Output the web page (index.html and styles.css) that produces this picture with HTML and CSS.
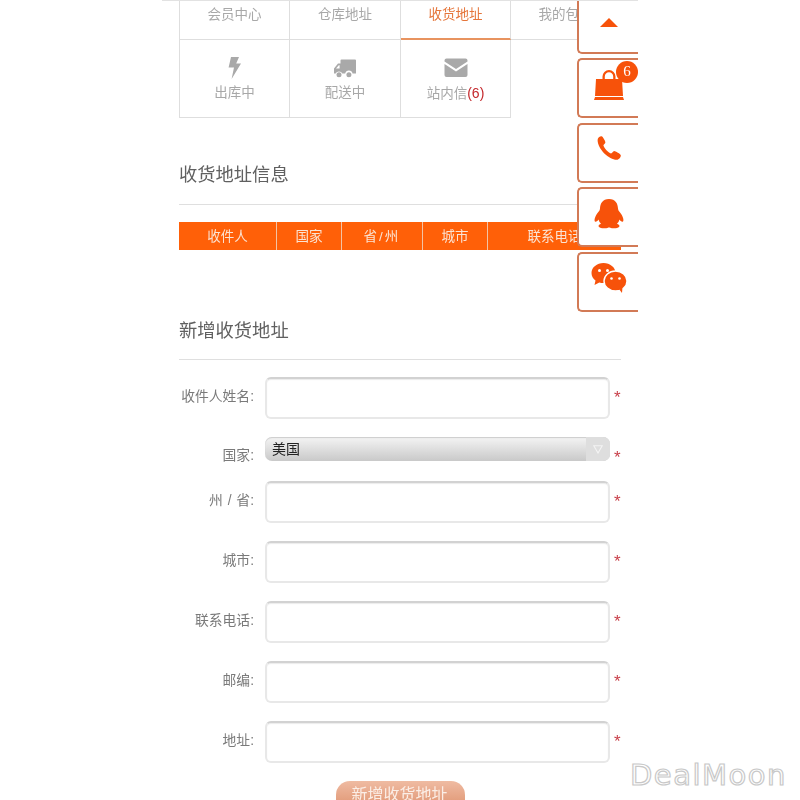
FILE: index.html
```html
<!DOCTYPE html>
<html>
<head>
	<meta charset="utf-8" />
	<title>收货地址</title>
	<link rel="stylesheet" href="styles.css">
</head>
<body>
<div class="page">
	<div class="tabs">
		<div class="tab">会员中心</div>
		<div class="tab">仓库地址</div>
		<div class="tab active">收货地址</div>
		<div class="tab">我的包裹</div>
		<div class="tab tall">
			<svg class="ico" width="14" height="22" viewBox="0 0 14 22"><path d="M3 0H11L8.2 6.5H13L3.6 22L6 10.5H0.6Z"/></svg>
			<span>出库中</span>
		</div>
		<div class="tab tall">
			<svg class="ico" width="24" height="22" viewBox="0 -1 24 22"><path d="M7.5 2.5A1 1 0 0 1 8.5 1.5H22A1 1 0 0 1 23 2.5V15.5H19.6A3.8 3.8 0 0 0 12.2 15.5H9.4A3.8 3.8 0 0 0 2.6 15.5H1V10.5L5 5.5H7.5ZM6.6 7.3H5.8L3 10.5H6.6Z" fill-rule="evenodd"/><circle cx="6" cy="16.8" r="2.5"/><circle cx="15.9" cy="16.8" r="2.5"/></svg>
			<span>配送中</span>
		</div>
		<div class="tab tall">
			<svg class="ico" width="24" height="22" viewBox="0 0 24 22"><path d="M2.5 1.5H21.5A2 2 0 0 1 23.5 3.5V4.5L12 12L0.5 4.5V3.5A2 2 0 0 1 2.5 1.5Z"/><path d="M0.5 7L12 14.5L23.5 7V18A2 2 0 0 1 21.5 20H2.5A2 2 0 0 1 0.5 18Z"/></svg>
			<span>站内信<b class="count">(6)</b></span>
		</div>
	</div>

	<h2 class="title first">收货地址信息</h2>
	<table class="addr">
		<tr>
			<th class="c1">收件人</th>
			<th class="c2">国家</th>
			<th class="c3">省/州</th>
			<th class="c4">城市</th>
			<th>联系电话</th>
		</tr>
	</table>

	<h2 class="title second">新增收货地址</h2>
	<form class="form">
		<div class="row"><label>收件人姓名:</label><input type="text"><span class="req">*</span></div>
		<div class="row sel">
			<label>国家:</label>
			<div class="selwrap">
				<select><option>美国</option></select>
				<span class="arrow"><svg width="10" height="9" viewBox="0 0 10 9"><path d="M0.8 0.8H9.2L5 8Z" fill="none" stroke="#f4f4f4" stroke-width="1.1"/></svg></span>
			</div>
			<span class="req">*</span>
		</div>
		<div class="row"><label>州 / 省:</label><input type="text"><span class="req">*</span></div>
		<div class="row"><label>城市:</label><input type="text"><span class="req">*</span></div>
		<div class="row"><label>联系电话:</label><input type="text"><span class="req">*</span></div>
		<div class="row"><label>邮编:</label><input type="text"><span class="req">*</span></div>
		<div class="row"><label>地址:</label><input type="text"><span class="req">*</span></div>
		<button type="button" class="submit">新增收货地址</button>
	</form>

	<div class="side">
		<div class="sidebox up"><svg width="18" height="9" viewBox="0 0 18 9"><path d="M9 0L18 9H0Z"/></svg></div>
		<div class="sidebox bag">
			<svg width="30" height="30" viewBox="0 0 30 30"><path d="M2 9H8.5V6.5A6.5 6.5 0 0 1 21.5 6.5V9H28L29 26H1ZM10.8 9H19.2V6.5A4.2 4.2 0 0 0 10.8 6.5Z" fill-rule="evenodd"/><path d="M1 27H29L30 30H0Z"/></svg>
			<span class="badge">6</span>
		</div>
		<div class="sidebox phone">
			<svg width="24" height="24" viewBox="0 0 24 24"><path d="M0.6 4C0.6 1.8 3 0 4.6 0.2C5.8 0.4 8.4 5 8.4 6.2C8.4 7.8 6.4 8.2 6.4 9.4C7.2 12 11.2 16.6 14 17.4C15.4 17.2 15.8 15.4 17.2 15C18.4 15 23.6 18 23.8 19.2C24 21 22 23.6 19.8 23.8C12.6 24 0.6 13.4 0.6 4Z"/></svg>
		</div>
		<div class="sidebox">
			<svg width="30" height="30" viewBox="0 0 30 30"><path d="M15 0C21.5 0 23.8 4.6 24 9.5C24.1 12 26 13 27.8 16C29.6 19.4 30 22.4 28.6 22.8C27.6 23 26.4 22 25.4 20.6C25 22.4 24.2 23.8 23 24.8C25.4 25.6 26 27.2 25 28C23.4 29.6 18.4 29.8 15.6 28.4C15.2 28.4 14.8 28.4 14.4 28.4C11.6 29.8 6.6 29.6 5 28C4 27.2 4.6 25.6 7 24.8C5.8 23.8 5 22.4 4.6 20.6C3.6 22 2.4 23 1.4 22.8C0 22.4 0.4 19.4 2.2 16C4 13 5.9 12 6 9.5C6.2 4.6 8.5 0 15 0Z"/></svg>
		</div>
		<div class="sidebox">
			<svg width="36" height="30" viewBox="0 0 36 30">
				<path d="M12.5 0C19 0 24.5 4.4 24.5 10C24.5 15.6 19 20 12.5 20C11 20 9.6 19.8 8.3 19.4L3.5 22L4.5 17.6C2 15.8 0.5 13 0.5 10C0.5 4.4 6 0 12.5 0Z"/>
				<ellipse cx="24.5" cy="18" rx="11.5" ry="10" stroke="#fff" stroke-width="1.4"/>
				<path d="M28 26L31 30L31.5 24Z"/>
				<circle cx="8.5" cy="7.5" r="1.5" fill="#fff"/><circle cx="16.5" cy="7.5" r="1.5" fill="#fff"/>
				<circle cx="20.5" cy="15.5" r="1.3" fill="#fff"/><circle cx="28.5" cy="15.5" r="1.3" fill="#fff"/>
			</svg>
		</div>
	</div>
</div>
<div class="mark">DealMoon</div>
</body>
</html>
```

FILE: styles.css
```css
html, body {
	margin: 0;
	padding: 0;
	background: #fff;
	overflow: hidden;
}
body {
	height: 800px;
	position: relative;
	font-family: "Liberation Sans", "Noto Sans CJK SC", sans-serif;
}
.page {
	position: relative;
	box-sizing: border-box;
	width: 476px;
	height: 800px;
	margin: 0 auto;
	padding: 0 17px;
	border-top: 1px solid #e2e2e2;
	overflow: hidden;
	filter: blur(0.35px);
}

/* tabs */
.tabs {
	display: grid;
	grid-template-columns: 111px 111px 110px 110px;
	grid-template-rows: 39px 78px;
	width: 442px;
}
.tab {
	box-sizing: border-box;
	border-right: 1px solid #dedede;
	border-bottom: 1px solid #dedede;
	text-align: center;
	font-size: 13.5px;
	line-height: 27px;
	color: #a8a8a8;
}
.tab:nth-child(1), .tab:nth-child(5) {
	border-left: 1px solid #dedede;
}
.tab.active {
	color: #e5753a;
	border-bottom: 2px solid #e8935f;
}
.tab.tall {
	display: flex;
	flex-direction: column;
	align-items: center;
	justify-content: flex-start;
	padding-top: 17px;
	line-height: 26px;
}
.ico {
	fill: #a9a9a9;
	height: 22px;
	display: block;
}
.tab.tall span {
	margin-top: 1px;
}
.count {
	color: #c4282c;
	font-size: 14px;
	font-weight: normal;
}

/* headings */
.title {
	margin: 0;
	font-size: 18.3px;
	font-weight: normal;
	line-height: 24px;
	color: #606060;
	border-bottom: 1px solid #dfdfdf;
}
.title.first {
	margin-top: 45px;
	padding-bottom: 17px;
}
.title.second {
	margin-top: 69px;
	padding-bottom: 16px;
}

/* table */
.addr {
	width: 442px;
	height: 28px;
	margin-top: 17px;
	border-collapse: collapse;
	table-layout: fixed;
}
.addr th {
	padding: 0 0 3px;
	background: #ff6008;
	border-right: 1px solid #f3c3a5;
	color: #fbe3d3;
	font-size: 13.5px;
	font-weight: normal;
}
.addr th:last-child {
	border-right: none;
}
.c1 { width: 97px; }
.c2 { width: 64px; }
.c3 { width: 80px; letter-spacing: 2px; }
.c4 { width: 64px; }

/* form */
.form {
	margin-top: 17px;
}
.row {
	display: grid;
	grid-template-columns: 75px 345px 11px;
	column-gap: 11px;
	align-items: center;
	margin-bottom: 18px;
}
.row label {
	margin-top: -2px;
	text-align: right;
	font-size: 13.8px;
	word-spacing: 1px;
	line-height: 20px;
	color: #7a7a7a;
}
.row input {
	box-sizing: border-box;
	width: 345px;
	height: 42px;
	margin: 0;
	border: 2px solid #e8e8e8;
	border-top-color: #d2d2d2;
	border-radius: 6px;
	background: #fff;
	box-shadow: inset 0 1px 1px #ececec;
	outline: none;
}
.req {
	margin-left: -7px;
	font-size: 17px;
	line-height: 20px;
	color: #c8404a;
}
.row.sel {
	align-items: start;
	height: 24px;
	margin-bottom: 20px;
}
.row.sel label {
	margin-top: 9px;
}
.row.sel .req {
	padding-top: 11px;
}
.selwrap {
	position: relative;
	height: 24px;
}
.selwrap select {
	appearance: none;
	-webkit-appearance: none;
	display: block;
	box-sizing: border-box;
	width: 345px;
	height: 24px;
	margin: 0;
	padding: 0 0 0 7px;
	border: none;
	border-radius: 7px;
	background: linear-gradient(#f4f4f4, #c9c9c9);
	box-shadow: inset 0 1px 1px #ccc;
	color: #222;
	font-family: "Liberation Sans", "Noto Sans CJK SC", sans-serif;
	font-size: 14px;
}
.arrow {
	position: absolute;
	top: 0;
	right: 0;
	width: 24px;
	height: 24px;
	display: flex;
	align-items: center;
	justify-content: center;
	background: #dedede;
	border-radius: 0 7px 7px 0;
}
.submit {
	display: block;
	width: 129px;
	height: 36px;
	margin: 2px 0 0 157px;
	padding: 0 2px 16px 0;
	border: none;
	border-radius: 14px;
	background: linear-gradient(#efbba2, #e29c7b 60%);
	color: #fbeee6;
	font-family: "Liberation Sans", "Noto Sans CJK SC", sans-serif;
	font-size: 16px;
}

/* floating buttons */
.side {
	position: absolute;
	top: -7.5px;
	right: 0;
	width: 61px;
	display: flex;
	flex-direction: column;
	gap: 4.5px;
}
.sidebox {
	position: relative;
	box-sizing: border-box;
	height: 60px;
	padding: 0 0 7px;
	display: flex;
	align-items: center;
	justify-content: center;
	background: #fff;
	border: 2px solid #d27a56;
	border-right: none;
	border-radius: 5px 0 0 5px;
}
.sidebox svg {
	fill: #f7520a;
}
.sidebox.up {
	padding-bottom: 3px;
}
.sidebox.phone {
	padding-bottom: 9px;
}
.badge {
	position: absolute;
	top: 1px;
	right: 0;
	width: 22px;
	height: 22px;
	border-radius: 50%;
	background: #f7520a;
	color: #fff;
	font-family: "Liberation Serif", serif;
	font-size: 15px;
	line-height: 20px;
	text-align: center;
}

/* watermark over the picture */
.mark {
	position: absolute;
	left: 630px;
	top: 758px;
	font-family: "DejaVu Sans", sans-serif;
	font-size: 29px;
	line-height: 34px;
	letter-spacing: 1.5px;
	color: #fff;
	-webkit-text-stroke: 1.2px #c8c8c8;
}
```
